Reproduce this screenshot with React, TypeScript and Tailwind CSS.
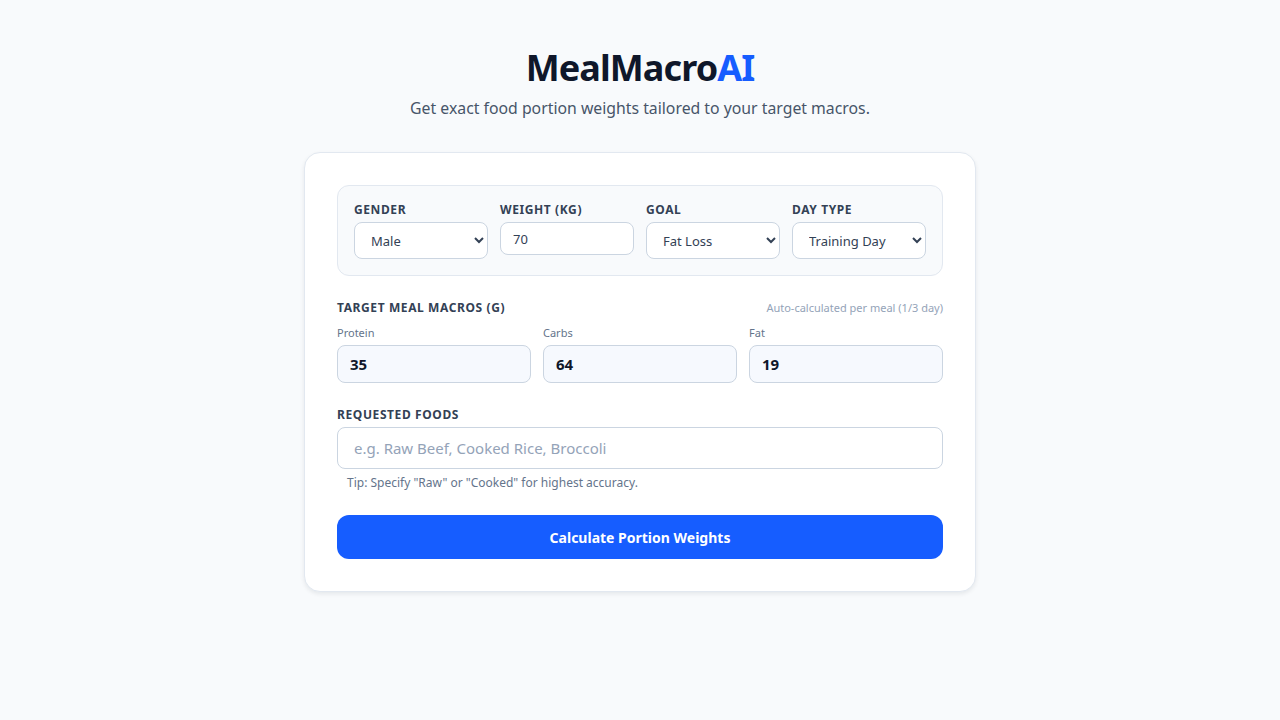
import React from "react";

export default function App() {
  const font = { fontFamily: '"Noto Sans", "Open Sans", sans-serif' };
  return (
    <div className="min-h-screen w-full bg-[#f8fafc] flex flex-col items-center" style={font}>
      <h1 className="mt-[44px] text-[36px] leading-[48px] font-bold tracking-tight text-[#0f172a]">
        MealMacro<span className="text-[#165dff]">AI</span>
      </h1>
      <p className="mt-[4px] text-[15.8px] leading-[24px] text-[#475569]">
        Get exact food portion weights tailored to your target macros.
      </p>

      <div className="mt-[32px] w-[672px] rounded-2xl border border-[#e2e8f0] bg-white p-8 shadow-[0_2px_4px_rgba(15,23,42,0.08)]">
        <div className="rounded-xl border border-[#e2e8f0] bg-[#f8fafc] p-4 grid grid-cols-4 gap-3">
          <div className="flex flex-col">
            <label className="text-[12px] leading-[16px] font-bold tracking-wider text-[#334155] uppercase">Gender</label>
            <select className="mt-1 h-[37px] rounded-lg border border-[#cbd5e1] bg-white pl-3 pr-2 text-[13px] text-[#334155]" defaultValue="Male">
              <option>Male</option>
              <option>Female</option>
            </select>
          </div>
          <div className="flex flex-col">
            <label className="text-[12px] leading-[16px] font-bold tracking-wider text-[#334155] uppercase">Weight (kg)</label>
            <input className="mt-1 h-[33px] rounded-lg border border-[#cbd5e1] bg-white px-3 text-[13px] text-[#334155] outline-none" defaultValue="70" />
          </div>
          <div className="flex flex-col">
            <label className="text-[12px] leading-[16px] font-bold tracking-wider text-[#334155] uppercase">Goal</label>
            <select className="mt-1 h-[37px] rounded-lg border border-[#cbd5e1] bg-white pl-3 pr-2 text-[13px] text-[#334155]" defaultValue="Fat Loss">
              <option>Fat Loss</option>
              <option>Maintenance</option>
              <option>Muscle Gain</option>
            </select>
          </div>
          <div className="flex flex-col">
            <label className="text-[12px] leading-[16px] font-bold tracking-wider text-[#334155] uppercase">Day Type</label>
            <select className="mt-1 h-[37px] rounded-lg border border-[#cbd5e1] bg-white pl-3 pr-2 text-[13px] text-[#334155]" defaultValue="Training Day">
              <option>Training Day</option>
              <option>Rest Day</option>
            </select>
          </div>
        </div>

        <div className="mt-[24px] flex items-center justify-between">
          <span className="text-[12px] leading-[16px] font-bold tracking-wider text-[#334155] uppercase">Target Meal Macros (g)</span>
          <span className="text-[11px] leading-[16px] text-[#94a3b8]">Auto-calculated per meal (1/3 day)</span>
        </div>
        <div className="mt-[9px] grid grid-cols-3 gap-3">
          {[
            ["Protein", "35"],
            ["Carbs", "64"],
            ["Fat", "19"],
          ].map(([l, v]) => (
            <div key={l} className="flex flex-col">
              <span className="text-[11px] leading-[16px] text-[#64748b]">{l}</span>
              <input
                className="mt-[4px] h-[38px] rounded-lg border border-[#cbd5e1] bg-[#f6f9fe] px-3 text-[15px] font-bold text-[#0f172a] outline-none"
                defaultValue={v}
              />
            </div>
          ))}
        </div>

        <div className="mt-[24px] text-[12px] leading-[16px] font-bold tracking-wider text-[#334155] uppercase">Requested Foods</div>
        <input
          className="mt-[4px] h-[42px] w-full rounded-lg border border-[#cbd5e1] bg-white px-4 text-[15px] text-[#0f172a] placeholder:text-[#94a3b8] outline-none"
          placeholder="e.g. Raw Beef, Cooked Rice, Broccoli"
        />
        <p className="mt-[6px] ml-[10px] text-[12px] leading-[16px] text-[#64748b]">Tip: Specify "Raw" or "Cooked" for highest accuracy.</p>

        <button className="mt-[24px] h-[44px] w-full rounded-xl bg-[#165dff] text-[14px] font-bold text-white">
          Calculate Portion Weights
        </button>
      </div>
    </div>
  );
}
